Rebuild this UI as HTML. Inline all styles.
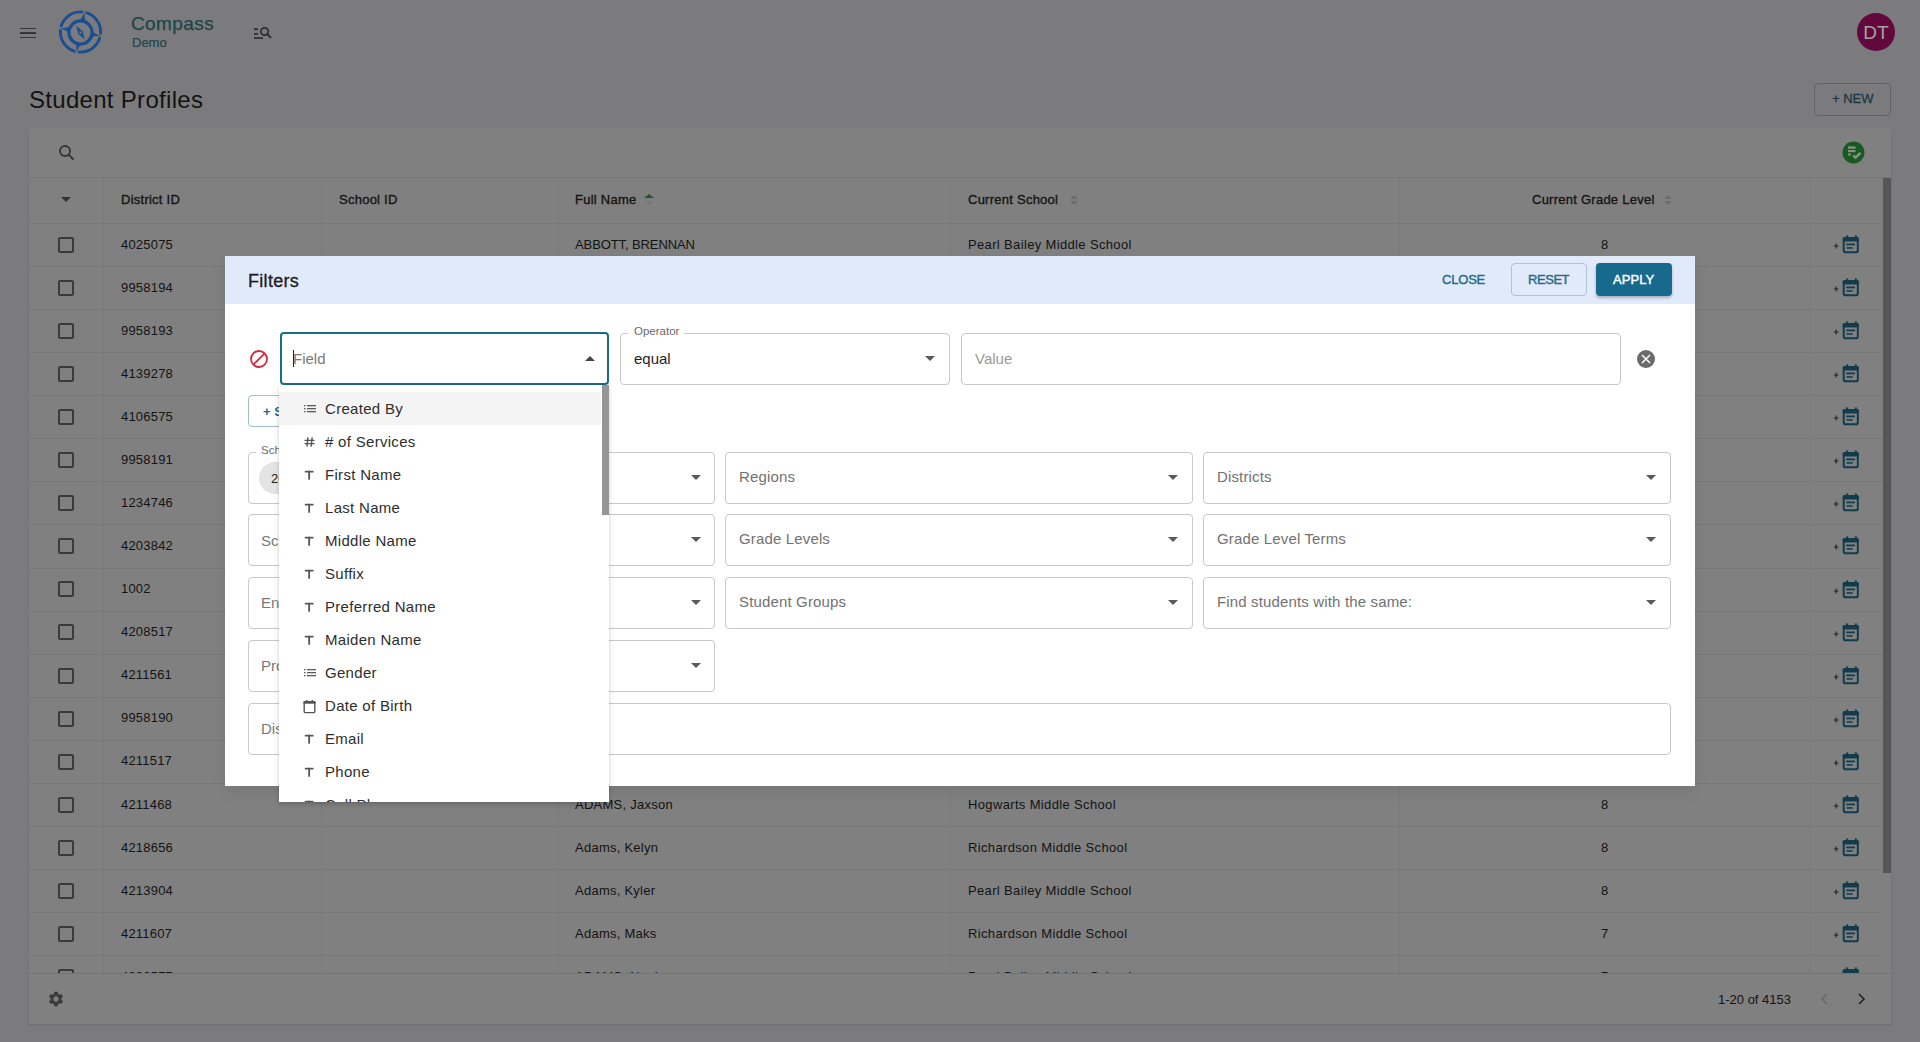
<!DOCTYPE html><html><head><meta charset="utf-8"><style>
*{box-sizing:border-box;margin:0;padding:0}
html,body{width:1920px;height:1042px;overflow:hidden}
body{background:#7b7b7d;font-family:"Liberation Sans",sans-serif;position:relative;color:#131313}
.abs{position:absolute}
.t{position:absolute;white-space:nowrap;line-height:1}
.paper{position:absolute;left:29px;top:128px;width:1862px;height:896px;background:#808080;overflow:hidden;box-shadow:0 1px 2px rgba(0,0,0,.12)}
.hl{position:absolute;left:0;height:1px;background:#777}
.vl{position:absolute;width:1px;background:#7a7a7a}
.cb{position:absolute;width:16px;height:16px;border:2px solid #3a3a3a;border-radius:2px}
.dlg{position:absolute;left:225px;top:256px;width:1470px;height:530px;background:#fff;overflow:hidden;box-shadow:0 6px 14px rgba(0,0,0,.07)}
.dhead{position:absolute;left:0;top:0;width:1470px;height:48px;background:#e1eafa}
.fld{position:absolute;border:1px solid #c8c8c8;border-radius:4px;background:#fff}
.ph{position:absolute;white-space:nowrap;line-height:1;color:#7a7a7a;font-size:15px}
.arr{position:absolute;width:0;height:0;border-left:5px solid transparent;border-right:5px solid transparent;border-top:5px solid #5a5a5a}
.dd{position:absolute;left:279px;top:385px;width:330px;height:417px;background:#fff;box-shadow:0 3px 6px rgba(0,0,0,.12),0 1px 3px rgba(0,0,0,.1);overflow:hidden}
.it{position:absolute;left:46px;white-space:nowrap;line-height:1;font-size:15px;letter-spacing:0.3px;color:#2e2e2e}
.ic{position:absolute;left:24px;width:12px;color:#555}
</style></head><body>
<div class="abs" style="left:20px;top:27.5px;width:16px;height:1.7px;background:#363636"></div>
<div class="abs" style="left:20px;top:32.1px;width:16px;height:1.7px;background:#363636"></div>
<div class="abs" style="left:20px;top:36.7px;width:16px;height:1.7px;background:#363636"></div>
<svg class="abs" style="left:56px;top:8px" width="50" height="50" viewBox="-24.5 -24 50 50">
<circle cx="0" cy="0" r="20.1" fill="none" stroke="#1a4e92" stroke-width="2.9"/>
<path d="M0 -22 Q0.5 -15 3.4 -11 L-3.4 -11 Q-0.5 -15 0 -22 Z" transform="rotate(11)" fill="#7b7b7d" stroke="#7b7b7d" stroke-width="2.2"/><path d="M0 -22 Q0.5 -15 3.4 -11 L-3.4 -11 Q-0.5 -15 0 -22 Z" transform="rotate(101)" fill="#7b7b7d" stroke="#7b7b7d" stroke-width="2.2"/><path d="M0 -22 Q0.5 -15 3.4 -11 L-3.4 -11 Q-0.5 -15 0 -22 Z" transform="rotate(191)" fill="#7b7b7d" stroke="#7b7b7d" stroke-width="2.2"/><path d="M0 -22 Q0.5 -15 3.4 -11 L-3.4 -11 Q-0.5 -15 0 -22 Z" transform="rotate(281)" fill="#7b7b7d" stroke="#7b7b7d" stroke-width="2.2"/>
<circle cx="0" cy="0.5" r="11.6" fill="none" stroke="#1a4e92" stroke-width="3.1"/>
<path d="M0 -22 Q0.5 -15 3.4 -11 L-3.4 -11 Q-0.5 -15 0 -22 Z" transform="rotate(11)" fill="#1a4e92"/><path d="M0 -22 Q0.5 -15 3.4 -11 L-3.4 -11 Q-0.5 -15 0 -22 Z" transform="rotate(101)" fill="#1a4e92"/><path d="M0 -22 Q0.5 -15 3.4 -11 L-3.4 -11 Q-0.5 -15 0 -22 Z" transform="rotate(191)" fill="#1a4e92"/><path d="M0 -22 Q0.5 -15 3.4 -11 L-3.4 -11 Q-0.5 -15 0 -22 Z" transform="rotate(281)" fill="#1a4e92"/>
<g transform="translate(0 0.6) rotate(-32)"><path d="M0 -8 L2.6 0 L0 8 L-2.6 0 Z" fill="#1a4e92"/><circle cx="0" cy="0" r="1.2" fill="#7b7b7d"/></g>
</svg>
<div class="t" style="left:131px;top:14px;font-size:19px;letter-spacing:0.4px;-webkit-text-stroke:0.25px #1e4548;color:#1e4548">Compass</div>
<div class="t" style="left:132px;top:36px;font-size:13px;-webkit-text-stroke:0.2px #1e4548;color:#1e4548">Demo</div>
<svg class="abs" style="left:252px;top:25px" width="22" height="16" viewBox="0 0 22 16">
<g fill="#2e2e2e"><rect x="2" y="3.2" width="4" height="1.9"/><rect x="2" y="8" width="4" height="1.8"/><rect x="2" y="12.2" width="9" height="1.7"/></g>
<circle cx="12.6" cy="6.5" r="3.7" fill="none" stroke="#2e2e2e" stroke-width="1.8"/>
<path d="M15.2 9.1 L19 12.9" stroke="#2e2e2e" stroke-width="2"/>
</svg>
<div class="abs" style="left:1857px;top:13px;width:38px;height:38px;border-radius:50%;background:#62083c"></div>
<div class="t" style="left:1857px;top:23px;width:38px;text-align:center;font-size:19px;color:#a3a3a3">DT</div>
<div class="t" style="left:29px;top:88px;font-size:24px;letter-spacing:0.3px;color:#131313">Student Profiles</div>
<div class="abs" style="left:1814px;top:83px;width:77px;height:33px;border:1px solid #626262;border-radius:4px"></div>
<div class="t" style="left:1832px;top:92px;font-size:13px;-webkit-text-stroke:0.3px #1d3844;color:#1d3844">+ NEW</div>
<div class="paper">
<svg class="abs" style="left:29px;top:16px" width="18" height="18" viewBox="0 0 18 18">
<circle cx="7" cy="7" r="5" fill="none" stroke="#333" stroke-width="1.8"/><path d="M10.6 10.6 L15.5 15.5" stroke="#333" stroke-width="2"/></svg>
<svg class="abs" style="left:1813px;top:13px" width="23" height="23" viewBox="0 0 23 23">
<circle cx="11.5" cy="11.5" r="11" fill="#1a5a22"/>
<g fill="#8a928a"><rect x="6" y="5.4" width="7.5" height="2.3"/><rect x="6" y="9.1" width="7.5" height="2"/><rect x="6" y="12.5" width="2.8" height="2"/></g>
<path d="M11.2 14.4 L13.5 16.7 L18.6 11.8" fill="none" stroke="#8a928a" stroke-width="2.3"/>
</svg>
<div class="hl" style="top:49px;width:1862px"></div>
<div class="hl" style="top:95.00px;width:1854px"></div>
<div class="hl" style="top:138.07px;width:1854px"></div>
<div class="hl" style="top:181.14px;width:1854px"></div>
<div class="hl" style="top:224.21px;width:1854px"></div>
<div class="hl" style="top:267.28px;width:1854px"></div>
<div class="hl" style="top:310.35px;width:1854px"></div>
<div class="hl" style="top:353.42px;width:1854px"></div>
<div class="hl" style="top:396.49px;width:1854px"></div>
<div class="hl" style="top:439.56px;width:1854px"></div>
<div class="hl" style="top:482.63px;width:1854px"></div>
<div class="hl" style="top:525.70px;width:1854px"></div>
<div class="hl" style="top:568.77px;width:1854px"></div>
<div class="hl" style="top:611.84px;width:1854px"></div>
<div class="hl" style="top:654.91px;width:1854px"></div>
<div class="hl" style="top:697.98px;width:1854px"></div>
<div class="hl" style="top:741.05px;width:1854px"></div>
<div class="hl" style="top:784.12px;width:1854px"></div>
<div class="hl" style="top:827.19px;width:1854px"></div>
<div class="hl" style="top:870.26px;width:1854px"></div>
<div class="vl" style="left:74px;top:50px;height:795px"></div>
<div class="vl" style="left:292px;top:50px;height:795px"></div>
<div class="vl" style="left:529px;top:50px;height:795px"></div>
<div class="vl" style="left:921px;top:50px;height:795px"></div>
<div class="vl" style="left:1370px;top:50px;height:795px"></div>
<div class="vl" style="left:1781px;top:50px;height:795px"></div>
<div class="arr" style="left:32px;top:69px;border-top-color:#333"></div>
<div class="t" style="left:92px;top:64.5px;font-size:13px;letter-spacing:0.25px;-webkit-text-stroke:0.35px #141414;color:#141414">District ID</div>
<div class="t" style="left:310px;top:64.5px;font-size:13px;letter-spacing:0.25px;-webkit-text-stroke:0.35px #141414;color:#141414">School ID</div>
<div class="t" style="left:546px;top:64.5px;font-size:13px;letter-spacing:0.25px;-webkit-text-stroke:0.35px #141414;color:#141414">Full Name</div>
<div class="t" style="left:939px;top:64.5px;font-size:13px;letter-spacing:0.25px;-webkit-text-stroke:0.35px #141414;color:#141414">Current School</div>
<div class="t" style="left:1503px;top:64.5px;font-size:13px;letter-spacing:0.25px;-webkit-text-stroke:0.35px #141414;color:#141414">Current Grade Level</div>
<div class="abs" style="left:615px;top:66px;width:0;height:0;border-left:5px solid transparent;border-right:5px solid transparent;border-bottom:4.5px solid #1f5a22"></div><div class="abs" style="left:615px;top:72.5px;width:0;height:0;border-left:5px solid transparent;border-right:5px solid transparent;border-top:4.5px solid #787878"></div>
<div class="abs" style="left:1041px;top:66.5px;width:0;height:0;border-left:4px solid transparent;border-right:4px solid transparent;border-bottom:4.5px solid #6c6c6c"></div><div class="abs" style="left:1041px;top:73.0px;width:0;height:0;border-left:4px solid transparent;border-right:4px solid transparent;border-top:4.5px solid #6c6c6c"></div>
<div class="abs" style="left:1635px;top:66.5px;width:0;height:0;border-left:4px solid transparent;border-right:4px solid transparent;border-bottom:4.5px solid #6c6c6c"></div><div class="abs" style="left:1635px;top:73.0px;width:0;height:0;border-left:4px solid transparent;border-right:4px solid transparent;border-top:4.5px solid #6c6c6c"></div>
<div class="cb" style="left:29px;top:108.80px"></div>
<div class="t" style="left:92px;top:109.60px;font-size:13px;letter-spacing:0.2px">4025075</div>
<div class="t" style="left:546px;top:109.60px;font-size:13px;letter-spacing:-0.1px">ABBOTT, BRENNAN</div>
<div class="t" style="left:939px;top:109.60px;font-size:13px;letter-spacing:0.35px">Pearl Bailey Middle School</div>
<div class="t" style="left:1572px;top:109.60px;font-size:13px">8</div>
<svg class="abs" style="left:1803px;top:107.00px" width="28" height="20" viewBox="0 0 28 20">
<path d="M1.8 11 H6.6 M4.2 8.6 V13.4" stroke="#262626" stroke-width="1.2"/>
<g fill="#123c4b"><rect x="11.7" y="3" width="14.1" height="14.2" rx="1.8" fill="none" stroke="#123c4b" stroke-width="2"/>
<rect x="10.7" y="2" width="16.1" height="4.6" rx="1.5"/>
<rect x="14.2" y="0.4" width="1.9" height="2.2"/><rect x="22.9" y="0.4" width="1.9" height="2.2"/>
<rect x="14.2" y="8.5" width="8.8" height="1.8"/><rect x="14.5" y="12.2" width="6.2" height="1.5"/></g>
</svg>
<div class="cb" style="left:29px;top:151.87px"></div>
<div class="t" style="left:92px;top:152.67px;font-size:13px;letter-spacing:0.2px">9958194</div>
<svg class="abs" style="left:1803px;top:150.07px" width="28" height="20" viewBox="0 0 28 20">
<path d="M1.8 11 H6.6 M4.2 8.6 V13.4" stroke="#262626" stroke-width="1.2"/>
<g fill="#123c4b"><rect x="11.7" y="3" width="14.1" height="14.2" rx="1.8" fill="none" stroke="#123c4b" stroke-width="2"/>
<rect x="10.7" y="2" width="16.1" height="4.6" rx="1.5"/>
<rect x="14.2" y="0.4" width="1.9" height="2.2"/><rect x="22.9" y="0.4" width="1.9" height="2.2"/>
<rect x="14.2" y="8.5" width="8.8" height="1.8"/><rect x="14.5" y="12.2" width="6.2" height="1.5"/></g>
</svg>
<div class="cb" style="left:29px;top:194.94px"></div>
<div class="t" style="left:92px;top:195.74px;font-size:13px;letter-spacing:0.2px">9958193</div>
<svg class="abs" style="left:1803px;top:193.14px" width="28" height="20" viewBox="0 0 28 20">
<path d="M1.8 11 H6.6 M4.2 8.6 V13.4" stroke="#262626" stroke-width="1.2"/>
<g fill="#123c4b"><rect x="11.7" y="3" width="14.1" height="14.2" rx="1.8" fill="none" stroke="#123c4b" stroke-width="2"/>
<rect x="10.7" y="2" width="16.1" height="4.6" rx="1.5"/>
<rect x="14.2" y="0.4" width="1.9" height="2.2"/><rect x="22.9" y="0.4" width="1.9" height="2.2"/>
<rect x="14.2" y="8.5" width="8.8" height="1.8"/><rect x="14.5" y="12.2" width="6.2" height="1.5"/></g>
</svg>
<div class="cb" style="left:29px;top:238.01px"></div>
<div class="t" style="left:92px;top:238.81px;font-size:13px;letter-spacing:0.2px">4139278</div>
<svg class="abs" style="left:1803px;top:236.21px" width="28" height="20" viewBox="0 0 28 20">
<path d="M1.8 11 H6.6 M4.2 8.6 V13.4" stroke="#262626" stroke-width="1.2"/>
<g fill="#123c4b"><rect x="11.7" y="3" width="14.1" height="14.2" rx="1.8" fill="none" stroke="#123c4b" stroke-width="2"/>
<rect x="10.7" y="2" width="16.1" height="4.6" rx="1.5"/>
<rect x="14.2" y="0.4" width="1.9" height="2.2"/><rect x="22.9" y="0.4" width="1.9" height="2.2"/>
<rect x="14.2" y="8.5" width="8.8" height="1.8"/><rect x="14.5" y="12.2" width="6.2" height="1.5"/></g>
</svg>
<div class="cb" style="left:29px;top:281.08px"></div>
<div class="t" style="left:92px;top:281.88px;font-size:13px;letter-spacing:0.2px">4106575</div>
<svg class="abs" style="left:1803px;top:279.28px" width="28" height="20" viewBox="0 0 28 20">
<path d="M1.8 11 H6.6 M4.2 8.6 V13.4" stroke="#262626" stroke-width="1.2"/>
<g fill="#123c4b"><rect x="11.7" y="3" width="14.1" height="14.2" rx="1.8" fill="none" stroke="#123c4b" stroke-width="2"/>
<rect x="10.7" y="2" width="16.1" height="4.6" rx="1.5"/>
<rect x="14.2" y="0.4" width="1.9" height="2.2"/><rect x="22.9" y="0.4" width="1.9" height="2.2"/>
<rect x="14.2" y="8.5" width="8.8" height="1.8"/><rect x="14.5" y="12.2" width="6.2" height="1.5"/></g>
</svg>
<div class="cb" style="left:29px;top:324.15px"></div>
<div class="t" style="left:92px;top:324.95px;font-size:13px;letter-spacing:0.2px">9958191</div>
<svg class="abs" style="left:1803px;top:322.35px" width="28" height="20" viewBox="0 0 28 20">
<path d="M1.8 11 H6.6 M4.2 8.6 V13.4" stroke="#262626" stroke-width="1.2"/>
<g fill="#123c4b"><rect x="11.7" y="3" width="14.1" height="14.2" rx="1.8" fill="none" stroke="#123c4b" stroke-width="2"/>
<rect x="10.7" y="2" width="16.1" height="4.6" rx="1.5"/>
<rect x="14.2" y="0.4" width="1.9" height="2.2"/><rect x="22.9" y="0.4" width="1.9" height="2.2"/>
<rect x="14.2" y="8.5" width="8.8" height="1.8"/><rect x="14.5" y="12.2" width="6.2" height="1.5"/></g>
</svg>
<div class="cb" style="left:29px;top:367.22px"></div>
<div class="t" style="left:92px;top:368.02px;font-size:13px;letter-spacing:0.2px">1234746</div>
<svg class="abs" style="left:1803px;top:365.42px" width="28" height="20" viewBox="0 0 28 20">
<path d="M1.8 11 H6.6 M4.2 8.6 V13.4" stroke="#262626" stroke-width="1.2"/>
<g fill="#123c4b"><rect x="11.7" y="3" width="14.1" height="14.2" rx="1.8" fill="none" stroke="#123c4b" stroke-width="2"/>
<rect x="10.7" y="2" width="16.1" height="4.6" rx="1.5"/>
<rect x="14.2" y="0.4" width="1.9" height="2.2"/><rect x="22.9" y="0.4" width="1.9" height="2.2"/>
<rect x="14.2" y="8.5" width="8.8" height="1.8"/><rect x="14.5" y="12.2" width="6.2" height="1.5"/></g>
</svg>
<div class="cb" style="left:29px;top:410.29px"></div>
<div class="t" style="left:92px;top:411.09px;font-size:13px;letter-spacing:0.2px">4203842</div>
<svg class="abs" style="left:1803px;top:408.49px" width="28" height="20" viewBox="0 0 28 20">
<path d="M1.8 11 H6.6 M4.2 8.6 V13.4" stroke="#262626" stroke-width="1.2"/>
<g fill="#123c4b"><rect x="11.7" y="3" width="14.1" height="14.2" rx="1.8" fill="none" stroke="#123c4b" stroke-width="2"/>
<rect x="10.7" y="2" width="16.1" height="4.6" rx="1.5"/>
<rect x="14.2" y="0.4" width="1.9" height="2.2"/><rect x="22.9" y="0.4" width="1.9" height="2.2"/>
<rect x="14.2" y="8.5" width="8.8" height="1.8"/><rect x="14.5" y="12.2" width="6.2" height="1.5"/></g>
</svg>
<div class="cb" style="left:29px;top:453.36px"></div>
<div class="t" style="left:92px;top:454.16px;font-size:13px;letter-spacing:0.2px">1002</div>
<svg class="abs" style="left:1803px;top:451.56px" width="28" height="20" viewBox="0 0 28 20">
<path d="M1.8 11 H6.6 M4.2 8.6 V13.4" stroke="#262626" stroke-width="1.2"/>
<g fill="#123c4b"><rect x="11.7" y="3" width="14.1" height="14.2" rx="1.8" fill="none" stroke="#123c4b" stroke-width="2"/>
<rect x="10.7" y="2" width="16.1" height="4.6" rx="1.5"/>
<rect x="14.2" y="0.4" width="1.9" height="2.2"/><rect x="22.9" y="0.4" width="1.9" height="2.2"/>
<rect x="14.2" y="8.5" width="8.8" height="1.8"/><rect x="14.5" y="12.2" width="6.2" height="1.5"/></g>
</svg>
<div class="cb" style="left:29px;top:496.43px"></div>
<div class="t" style="left:92px;top:497.23px;font-size:13px;letter-spacing:0.2px">4208517</div>
<svg class="abs" style="left:1803px;top:494.63px" width="28" height="20" viewBox="0 0 28 20">
<path d="M1.8 11 H6.6 M4.2 8.6 V13.4" stroke="#262626" stroke-width="1.2"/>
<g fill="#123c4b"><rect x="11.7" y="3" width="14.1" height="14.2" rx="1.8" fill="none" stroke="#123c4b" stroke-width="2"/>
<rect x="10.7" y="2" width="16.1" height="4.6" rx="1.5"/>
<rect x="14.2" y="0.4" width="1.9" height="2.2"/><rect x="22.9" y="0.4" width="1.9" height="2.2"/>
<rect x="14.2" y="8.5" width="8.8" height="1.8"/><rect x="14.5" y="12.2" width="6.2" height="1.5"/></g>
</svg>
<div class="cb" style="left:29px;top:539.50px"></div>
<div class="t" style="left:92px;top:540.30px;font-size:13px;letter-spacing:0.2px">4211561</div>
<svg class="abs" style="left:1803px;top:537.70px" width="28" height="20" viewBox="0 0 28 20">
<path d="M1.8 11 H6.6 M4.2 8.6 V13.4" stroke="#262626" stroke-width="1.2"/>
<g fill="#123c4b"><rect x="11.7" y="3" width="14.1" height="14.2" rx="1.8" fill="none" stroke="#123c4b" stroke-width="2"/>
<rect x="10.7" y="2" width="16.1" height="4.6" rx="1.5"/>
<rect x="14.2" y="0.4" width="1.9" height="2.2"/><rect x="22.9" y="0.4" width="1.9" height="2.2"/>
<rect x="14.2" y="8.5" width="8.8" height="1.8"/><rect x="14.5" y="12.2" width="6.2" height="1.5"/></g>
</svg>
<div class="cb" style="left:29px;top:582.57px"></div>
<div class="t" style="left:92px;top:583.37px;font-size:13px;letter-spacing:0.2px">9958190</div>
<svg class="abs" style="left:1803px;top:580.77px" width="28" height="20" viewBox="0 0 28 20">
<path d="M1.8 11 H6.6 M4.2 8.6 V13.4" stroke="#262626" stroke-width="1.2"/>
<g fill="#123c4b"><rect x="11.7" y="3" width="14.1" height="14.2" rx="1.8" fill="none" stroke="#123c4b" stroke-width="2"/>
<rect x="10.7" y="2" width="16.1" height="4.6" rx="1.5"/>
<rect x="14.2" y="0.4" width="1.9" height="2.2"/><rect x="22.9" y="0.4" width="1.9" height="2.2"/>
<rect x="14.2" y="8.5" width="8.8" height="1.8"/><rect x="14.5" y="12.2" width="6.2" height="1.5"/></g>
</svg>
<div class="cb" style="left:29px;top:625.64px"></div>
<div class="t" style="left:92px;top:626.44px;font-size:13px;letter-spacing:0.2px">4211517</div>
<svg class="abs" style="left:1803px;top:623.84px" width="28" height="20" viewBox="0 0 28 20">
<path d="M1.8 11 H6.6 M4.2 8.6 V13.4" stroke="#262626" stroke-width="1.2"/>
<g fill="#123c4b"><rect x="11.7" y="3" width="14.1" height="14.2" rx="1.8" fill="none" stroke="#123c4b" stroke-width="2"/>
<rect x="10.7" y="2" width="16.1" height="4.6" rx="1.5"/>
<rect x="14.2" y="0.4" width="1.9" height="2.2"/><rect x="22.9" y="0.4" width="1.9" height="2.2"/>
<rect x="14.2" y="8.5" width="8.8" height="1.8"/><rect x="14.5" y="12.2" width="6.2" height="1.5"/></g>
</svg>
<div class="cb" style="left:29px;top:668.71px"></div>
<div class="t" style="left:92px;top:669.51px;font-size:13px;letter-spacing:0.2px">4211468</div>
<div class="t" style="left:546px;top:669.51px;font-size:13px;letter-spacing:0.25px">ADAMS, Jaxson</div>
<div class="t" style="left:939px;top:669.51px;font-size:13px;letter-spacing:0.35px">Hogwarts Middle School</div>
<div class="t" style="left:1572px;top:669.51px;font-size:13px">8</div>
<svg class="abs" style="left:1803px;top:666.91px" width="28" height="20" viewBox="0 0 28 20">
<path d="M1.8 11 H6.6 M4.2 8.6 V13.4" stroke="#262626" stroke-width="1.2"/>
<g fill="#123c4b"><rect x="11.7" y="3" width="14.1" height="14.2" rx="1.8" fill="none" stroke="#123c4b" stroke-width="2"/>
<rect x="10.7" y="2" width="16.1" height="4.6" rx="1.5"/>
<rect x="14.2" y="0.4" width="1.9" height="2.2"/><rect x="22.9" y="0.4" width="1.9" height="2.2"/>
<rect x="14.2" y="8.5" width="8.8" height="1.8"/><rect x="14.5" y="12.2" width="6.2" height="1.5"/></g>
</svg>
<div class="cb" style="left:29px;top:711.78px"></div>
<div class="t" style="left:92px;top:712.58px;font-size:13px;letter-spacing:0.2px">4218656</div>
<div class="t" style="left:546px;top:712.58px;font-size:13px;letter-spacing:0.25px">Adams, Kelyn</div>
<div class="t" style="left:939px;top:712.58px;font-size:13px;letter-spacing:0.35px">Richardson Middle School</div>
<div class="t" style="left:1572px;top:712.58px;font-size:13px">8</div>
<svg class="abs" style="left:1803px;top:709.98px" width="28" height="20" viewBox="0 0 28 20">
<path d="M1.8 11 H6.6 M4.2 8.6 V13.4" stroke="#262626" stroke-width="1.2"/>
<g fill="#123c4b"><rect x="11.7" y="3" width="14.1" height="14.2" rx="1.8" fill="none" stroke="#123c4b" stroke-width="2"/>
<rect x="10.7" y="2" width="16.1" height="4.6" rx="1.5"/>
<rect x="14.2" y="0.4" width="1.9" height="2.2"/><rect x="22.9" y="0.4" width="1.9" height="2.2"/>
<rect x="14.2" y="8.5" width="8.8" height="1.8"/><rect x="14.5" y="12.2" width="6.2" height="1.5"/></g>
</svg>
<div class="cb" style="left:29px;top:754.85px"></div>
<div class="t" style="left:92px;top:755.65px;font-size:13px;letter-spacing:0.2px">4213904</div>
<div class="t" style="left:546px;top:755.65px;font-size:13px;letter-spacing:0.25px">Adams, Kyler</div>
<div class="t" style="left:939px;top:755.65px;font-size:13px;letter-spacing:0.35px">Pearl Bailey Middle School</div>
<div class="t" style="left:1572px;top:755.65px;font-size:13px">8</div>
<svg class="abs" style="left:1803px;top:753.05px" width="28" height="20" viewBox="0 0 28 20">
<path d="M1.8 11 H6.6 M4.2 8.6 V13.4" stroke="#262626" stroke-width="1.2"/>
<g fill="#123c4b"><rect x="11.7" y="3" width="14.1" height="14.2" rx="1.8" fill="none" stroke="#123c4b" stroke-width="2"/>
<rect x="10.7" y="2" width="16.1" height="4.6" rx="1.5"/>
<rect x="14.2" y="0.4" width="1.9" height="2.2"/><rect x="22.9" y="0.4" width="1.9" height="2.2"/>
<rect x="14.2" y="8.5" width="8.8" height="1.8"/><rect x="14.5" y="12.2" width="6.2" height="1.5"/></g>
</svg>
<div class="cb" style="left:29px;top:797.92px"></div>
<div class="t" style="left:92px;top:798.72px;font-size:13px;letter-spacing:0.2px">4211607</div>
<div class="t" style="left:546px;top:798.72px;font-size:13px;letter-spacing:0.25px">Adams, Maks</div>
<div class="t" style="left:939px;top:798.72px;font-size:13px;letter-spacing:0.35px">Richardson Middle School</div>
<div class="t" style="left:1572px;top:798.72px;font-size:13px">7</div>
<svg class="abs" style="left:1803px;top:796.12px" width="28" height="20" viewBox="0 0 28 20">
<path d="M1.8 11 H6.6 M4.2 8.6 V13.4" stroke="#262626" stroke-width="1.2"/>
<g fill="#123c4b"><rect x="11.7" y="3" width="14.1" height="14.2" rx="1.8" fill="none" stroke="#123c4b" stroke-width="2"/>
<rect x="10.7" y="2" width="16.1" height="4.6" rx="1.5"/>
<rect x="14.2" y="0.4" width="1.9" height="2.2"/><rect x="22.9" y="0.4" width="1.9" height="2.2"/>
<rect x="14.2" y="8.5" width="8.8" height="1.8"/><rect x="14.5" y="12.2" width="6.2" height="1.5"/></g>
</svg>
<div class="cb" style="left:29px;top:840.99px"></div>
<div class="t" style="left:92px;top:841.79px;font-size:13px;letter-spacing:0.2px">4099577</div>
<div class="t" style="left:546px;top:841.79px;font-size:13px;letter-spacing:0.25px">ADAMS, Noah</div>
<div class="t" style="left:939px;top:841.79px;font-size:13px;letter-spacing:0.35px">Pearl Bailey Middle School</div>
<div class="t" style="left:1572px;top:841.79px;font-size:13px">7</div>
<svg class="abs" style="left:1803px;top:839.19px" width="28" height="20" viewBox="0 0 28 20">
<path d="M1.8 11 H6.6 M4.2 8.6 V13.4" stroke="#262626" stroke-width="1.2"/>
<g fill="#123c4b"><rect x="11.7" y="3" width="14.1" height="14.2" rx="1.8" fill="none" stroke="#123c4b" stroke-width="2"/>
<rect x="10.7" y="2" width="16.1" height="4.6" rx="1.5"/>
<rect x="14.2" y="0.4" width="1.9" height="2.2"/><rect x="22.9" y="0.4" width="1.9" height="2.2"/>
<rect x="14.2" y="8.5" width="8.8" height="1.8"/><rect x="14.5" y="12.2" width="6.2" height="1.5"/></g>
</svg>
<div class="abs" style="left:0;top:845px;width:1862px;height:51px;background:#808080;border-top:1px solid #747474"></div>
<svg class="abs" style="left:18px;top:862px" width="18" height="18" viewBox="0 0 24 24"><path fill="#3a3a3a" d="M19.14 12.94c.04-.3.06-.61.06-.94 0-.32-.02-.64-.07-.94l2.03-1.58c.18-.14.23-.41.12-.61l-1.92-3.32c-.12-.22-.37-.29-.59-.22l-2.39.96c-.5-.38-1.03-.7-1.62-.94l-.36-2.54c-.04-.24-.24-.41-.48-.41h-3.84c-.24 0-.43.17-.47.41l-.36 2.54c-.59.24-1.13.57-1.62.94l-2.39-.96c-.22-.08-.47 0-.59.22L2.74 8.87c-.12.21-.08.47.12.61l2.03 1.58c-.05.3-.09.63-.09.94s.02.64.07.94l-2.03 1.58c-.18.14-.23.41-.12.61l1.92 3.32c.12.22.37.29.59.22l2.39-.96c.5.38 1.03.7 1.62.94l.36 2.54c.05.24.24.41.48.41h3.84c.24 0 .44-.17.47-.41l.36-2.54c.59-.24 1.13-.56 1.62-.94l2.39.96c.22.08.47 0 .59-.22l1.92-3.32c.12-.22.07-.47-.12-.61l-2.01-1.58zM12 15.6c-1.98 0-3.6-1.62-3.6-3.6s1.62-3.6 3.6-3.6 3.6 1.62 3.6 3.6-1.62 3.6-3.6 3.6z"/></svg>
<div class="t" style="left:1689px;top:865px;font-size:13px">1-20 of 4153</div>
<svg class="abs" style="left:1787px;top:863px" width="56" height="16" viewBox="0 0 56 16">
<path d="M11 3 L6 8 L11 13" fill="none" stroke="#6a6a6a" stroke-width="1.6"/>
<path d="M43 3 L48 8 L43 13" fill="none" stroke="#222" stroke-width="1.6"/></svg>
<div class="abs" style="left:1854px;top:50px;width:8px;height:695px;background:#565656"></div>
</div>
<div class="dlg">
<div class="dhead"></div>
<div class="t" style="left:23px;top:16px;font-size:18px;letter-spacing:0.3px;-webkit-text-stroke:0.3px #1c1c1c;color:#1c1c1c">Filters</div>
<div class="t" style="left:1217px;top:16.5px;font-size:13px;letter-spacing:-0.2px;-webkit-text-stroke:0.4px #286b88;color:#286b88">CLOSE</div>
<div class="abs" style="left:1286px;top:7px;width:76px;height:33px;border:1px solid #a9c6d3;border-radius:4px"></div>
<div class="t" style="left:1303px;top:16.5px;font-size:13px;letter-spacing:-0.45px;-webkit-text-stroke:0.4px #286b88;color:#286b88">RESET</div>
<div class="abs" style="left:1371px;top:7px;width:76px;height:33px;background:#176a8c;border-radius:4px;box-shadow:0 2px 3px rgba(0,0,0,.25)"></div>
<div class="t" style="left:1388px;top:16.5px;font-size:13px;letter-spacing:0.05px;-webkit-text-stroke:0.4px #fff;color:#fff">APPLY</div>
<svg class="abs" style="left:23.5px;top:93px" width="20" height="20" viewBox="0 0 20 20"><circle cx="10" cy="10" r="8" fill="none" stroke="#d2283c" stroke-width="1.8"/><path d="M4.6 15.4 L15.4 4.6" stroke="#d2283c" stroke-width="1.8"/></svg>
<div class="fld" style="left:55px;top:76px;width:329px;height:53px;border:2px solid #1b6a8a"></div>
<div class="abs" style="left:67.5px;top:94px;width:1.5px;height:17px;background:#222"></div>
<div class="ph" style="left:68px;top:95px">Field</div>
<div class="arr" style="left:360px;top:100px;border-top:none;border-bottom:5px solid #444"></div>
<div class="fld" style="left:395px;top:77px;width:330px;height:52px"></div>
<div class="abs" style="left:403px;top:74px;width:56px;height:6px;background:#fff"></div>
<div class="t" style="left:409px;top:70px;font-size:11.5px;color:#6a6a6a">Operator</div>
<div class="t" style="left:409px;top:95px;font-size:15px;color:#1e1e1e">equal</div>
<div class="arr" style="left:700px;top:100px"></div>
<div class="fld" style="left:736px;top:77px;width:660px;height:52px"></div>
<div class="ph" style="left:750px;top:95px;color:#9a9a9a">Value</div>
<svg class="abs" style="left:1411px;top:93px" width="20" height="20" viewBox="0 0 20 20"><circle cx="10" cy="10" r="9" fill="#6b6b6b"/><path d="M6 6 L14 14 M14 6 L6 14" stroke="#fff" stroke-width="1.5"/></svg>
<div class="abs" style="left:23px;top:139px;width:120px;height:32px;border:1px solid #9ec0d2;border-radius:4px"></div>
<div class="t" style="left:38px;top:149px;font-size:13px;font-weight:bold;color:#286b88">+ SAVE</div>
<div class="fld" style="left:23px;top:196px;width:467px;height:52px"></div>
<div class="arr" style="left:466px;top:219px"></div>
<div class="fld" style="left:23px;top:258px;width:467px;height:52px"></div>
<div class="arr" style="left:466px;top:281px"></div>
<div class="fld" style="left:23px;top:321px;width:467px;height:52px"></div>
<div class="arr" style="left:466px;top:344px"></div>
<div class="fld" style="left:23px;top:384px;width:467px;height:52px"></div>
<div class="arr" style="left:466px;top:407px"></div>
<div class="fld" style="left:500px;top:196px;width:468px;height:52px"></div>
<div class="ph" style="left:514px;top:213px;letter-spacing:0.15px;color:#727272">Regions</div>
<div class="arr" style="left:943px;top:219px"></div>
<div class="fld" style="left:978px;top:196px;width:468px;height:52px"></div>
<div class="ph" style="left:992px;top:213px;letter-spacing:0.15px;color:#727272">Districts</div>
<div class="arr" style="left:1421px;top:219px"></div>
<div class="fld" style="left:500px;top:258px;width:468px;height:52px"></div>
<div class="ph" style="left:514px;top:275px;letter-spacing:0.15px;color:#727272">Grade Levels</div>
<div class="arr" style="left:943px;top:281px"></div>
<div class="fld" style="left:978px;top:258px;width:468px;height:52px"></div>
<div class="ph" style="left:992px;top:275px;letter-spacing:0.15px;color:#727272">Grade Level Terms</div>
<div class="arr" style="left:1421px;top:281px"></div>
<div class="fld" style="left:500px;top:321px;width:468px;height:52px"></div>
<div class="ph" style="left:514px;top:338px;letter-spacing:0.15px;color:#727272">Student Groups</div>
<div class="arr" style="left:943px;top:344px"></div>
<div class="fld" style="left:978px;top:321px;width:468px;height:52px"></div>
<div class="ph" style="left:992px;top:338px;letter-spacing:0.15px;color:#727272">Find students with the same:</div>
<div class="arr" style="left:1421px;top:344px"></div>
<div class="abs" style="left:31px;top:193px;width:40px;height:6px;background:#fff"></div>
<div class="t" style="left:36px;top:189px;font-size:11.5px;color:#6a6a6a">School Years</div>
<div class="abs" style="left:34px;top:206px;width:60px;height:32px;border-radius:16px;background:#e4e4e4"></div>
<div class="t" style="left:46px;top:216px;font-size:13px;color:#222">2024</div>
<div class="ph" style="left:36px;top:277px">Schools</div>
<div class="ph" style="left:36px;top:339px">Enrollment</div>
<div class="ph" style="left:36px;top:402px">Programs</div>
<div class="fld" style="left:23px;top:447px;width:1423px;height:52px"></div>
<div class="ph" style="left:36px;top:465px">Disabilities</div>
</div>
<div class="dd">
<div class="abs" style="left:0;top:7px;width:322px;height:33px;background:#f4f4f4"></div>
<div class="it" style="top:16px">Created By</div>
<svg class="abs" style="left:25px;top:19px" width="12" height="10" viewBox="0 0 12 10"><g fill="#5a5a5a"><rect x="0" y="1" width="1.5" height="1.3"/><rect x="3" y="1" width="9" height="1.3"/><rect x="0" y="4" width="1.5" height="1.3"/><rect x="3" y="4" width="9" height="1.3"/><rect x="0" y="7" width="1.5" height="1.3"/><rect x="3" y="7" width="9" height="1.3"/></g></svg>
<div class="it" style="top:49px"># of Services</div>
<svg class="abs" style="left:24px;top:52px" width="13" height="12" viewBox="0 0 13 12"><g stroke="#555" stroke-width="1.4" fill="none"><path d="M1.5 3.4 H11.6 M1.5 6.6 H11.6 M5 0.4 L3.9 9.6 M9.2 0.4 L8.1 9.6"/></g></svg>
<div class="it" style="top:82px">First Name</div>
<svg class="abs" style="left:24px;top:85px" width="12" height="12" viewBox="0 0 12 12"><g fill="#555"><rect x="1.8" y="0.8" width="8.7" height="1.7"/><rect x="5.25" y="0.8" width="1.8" height="8.9"/></g></svg>
<div class="it" style="top:115px">Last Name</div>
<svg class="abs" style="left:24px;top:118px" width="12" height="12" viewBox="0 0 12 12"><g fill="#555"><rect x="1.8" y="0.8" width="8.7" height="1.7"/><rect x="5.25" y="0.8" width="1.8" height="8.9"/></g></svg>
<div class="it" style="top:148px">Middle Name</div>
<svg class="abs" style="left:24px;top:151px" width="12" height="12" viewBox="0 0 12 12"><g fill="#555"><rect x="1.8" y="0.8" width="8.7" height="1.7"/><rect x="5.25" y="0.8" width="1.8" height="8.9"/></g></svg>
<div class="it" style="top:181px">Suffix</div>
<svg class="abs" style="left:24px;top:184px" width="12" height="12" viewBox="0 0 12 12"><g fill="#555"><rect x="1.8" y="0.8" width="8.7" height="1.7"/><rect x="5.25" y="0.8" width="1.8" height="8.9"/></g></svg>
<div class="it" style="top:214px">Preferred Name</div>
<svg class="abs" style="left:24px;top:217px" width="12" height="12" viewBox="0 0 12 12"><g fill="#555"><rect x="1.8" y="0.8" width="8.7" height="1.7"/><rect x="5.25" y="0.8" width="1.8" height="8.9"/></g></svg>
<div class="it" style="top:247px">Maiden Name</div>
<svg class="abs" style="left:24px;top:250px" width="12" height="12" viewBox="0 0 12 12"><g fill="#555"><rect x="1.8" y="0.8" width="8.7" height="1.7"/><rect x="5.25" y="0.8" width="1.8" height="8.9"/></g></svg>
<div class="it" style="top:280px">Gender</div>
<svg class="abs" style="left:25px;top:283px" width="12" height="10" viewBox="0 0 12 10"><g fill="#5a5a5a"><rect x="0" y="1" width="1.5" height="1.3"/><rect x="3" y="1" width="9" height="1.3"/><rect x="0" y="4" width="1.5" height="1.3"/><rect x="3" y="4" width="9" height="1.3"/><rect x="0" y="7" width="1.5" height="1.3"/><rect x="3" y="7" width="9" height="1.3"/></g></svg>
<div class="it" style="top:313px">Date of Birth</div>
<svg class="abs" style="left:24px;top:315px" width="13" height="14" viewBox="0 0 13 14"><rect x="1.2" y="1.8" width="10.6" height="10.8" rx="1" fill="none" stroke="#555" stroke-width="1.4"/><rect x="0.5" y="1.1" width="12" height="2.6" fill="#555"/><rect x="3" y="0" width="1.4" height="1.5" fill="#555"/><rect x="8.6" y="0" width="1.4" height="1.5" fill="#555"/></svg>
<div class="it" style="top:346px">Email</div>
<svg class="abs" style="left:24px;top:349px" width="12" height="12" viewBox="0 0 12 12"><g fill="#555"><rect x="1.8" y="0.8" width="8.7" height="1.7"/><rect x="5.25" y="0.8" width="1.8" height="8.9"/></g></svg>
<div class="it" style="top:379px">Phone</div>
<svg class="abs" style="left:24px;top:382px" width="12" height="12" viewBox="0 0 12 12"><g fill="#555"><rect x="1.8" y="0.8" width="8.7" height="1.7"/><rect x="5.25" y="0.8" width="1.8" height="8.9"/></g></svg>
<div class="it" style="top:412px">Cell Phone</div>
<svg class="abs" style="left:24px;top:415px" width="12" height="12" viewBox="0 0 12 12"><g fill="#555"><rect x="1.8" y="0.8" width="8.7" height="1.7"/><rect x="5.25" y="0.8" width="1.8" height="8.9"/></g></svg>
<div class="abs" style="left:323px;top:0;width:7px;height:130px;background:#959595"></div>
</div>
</body></html>
